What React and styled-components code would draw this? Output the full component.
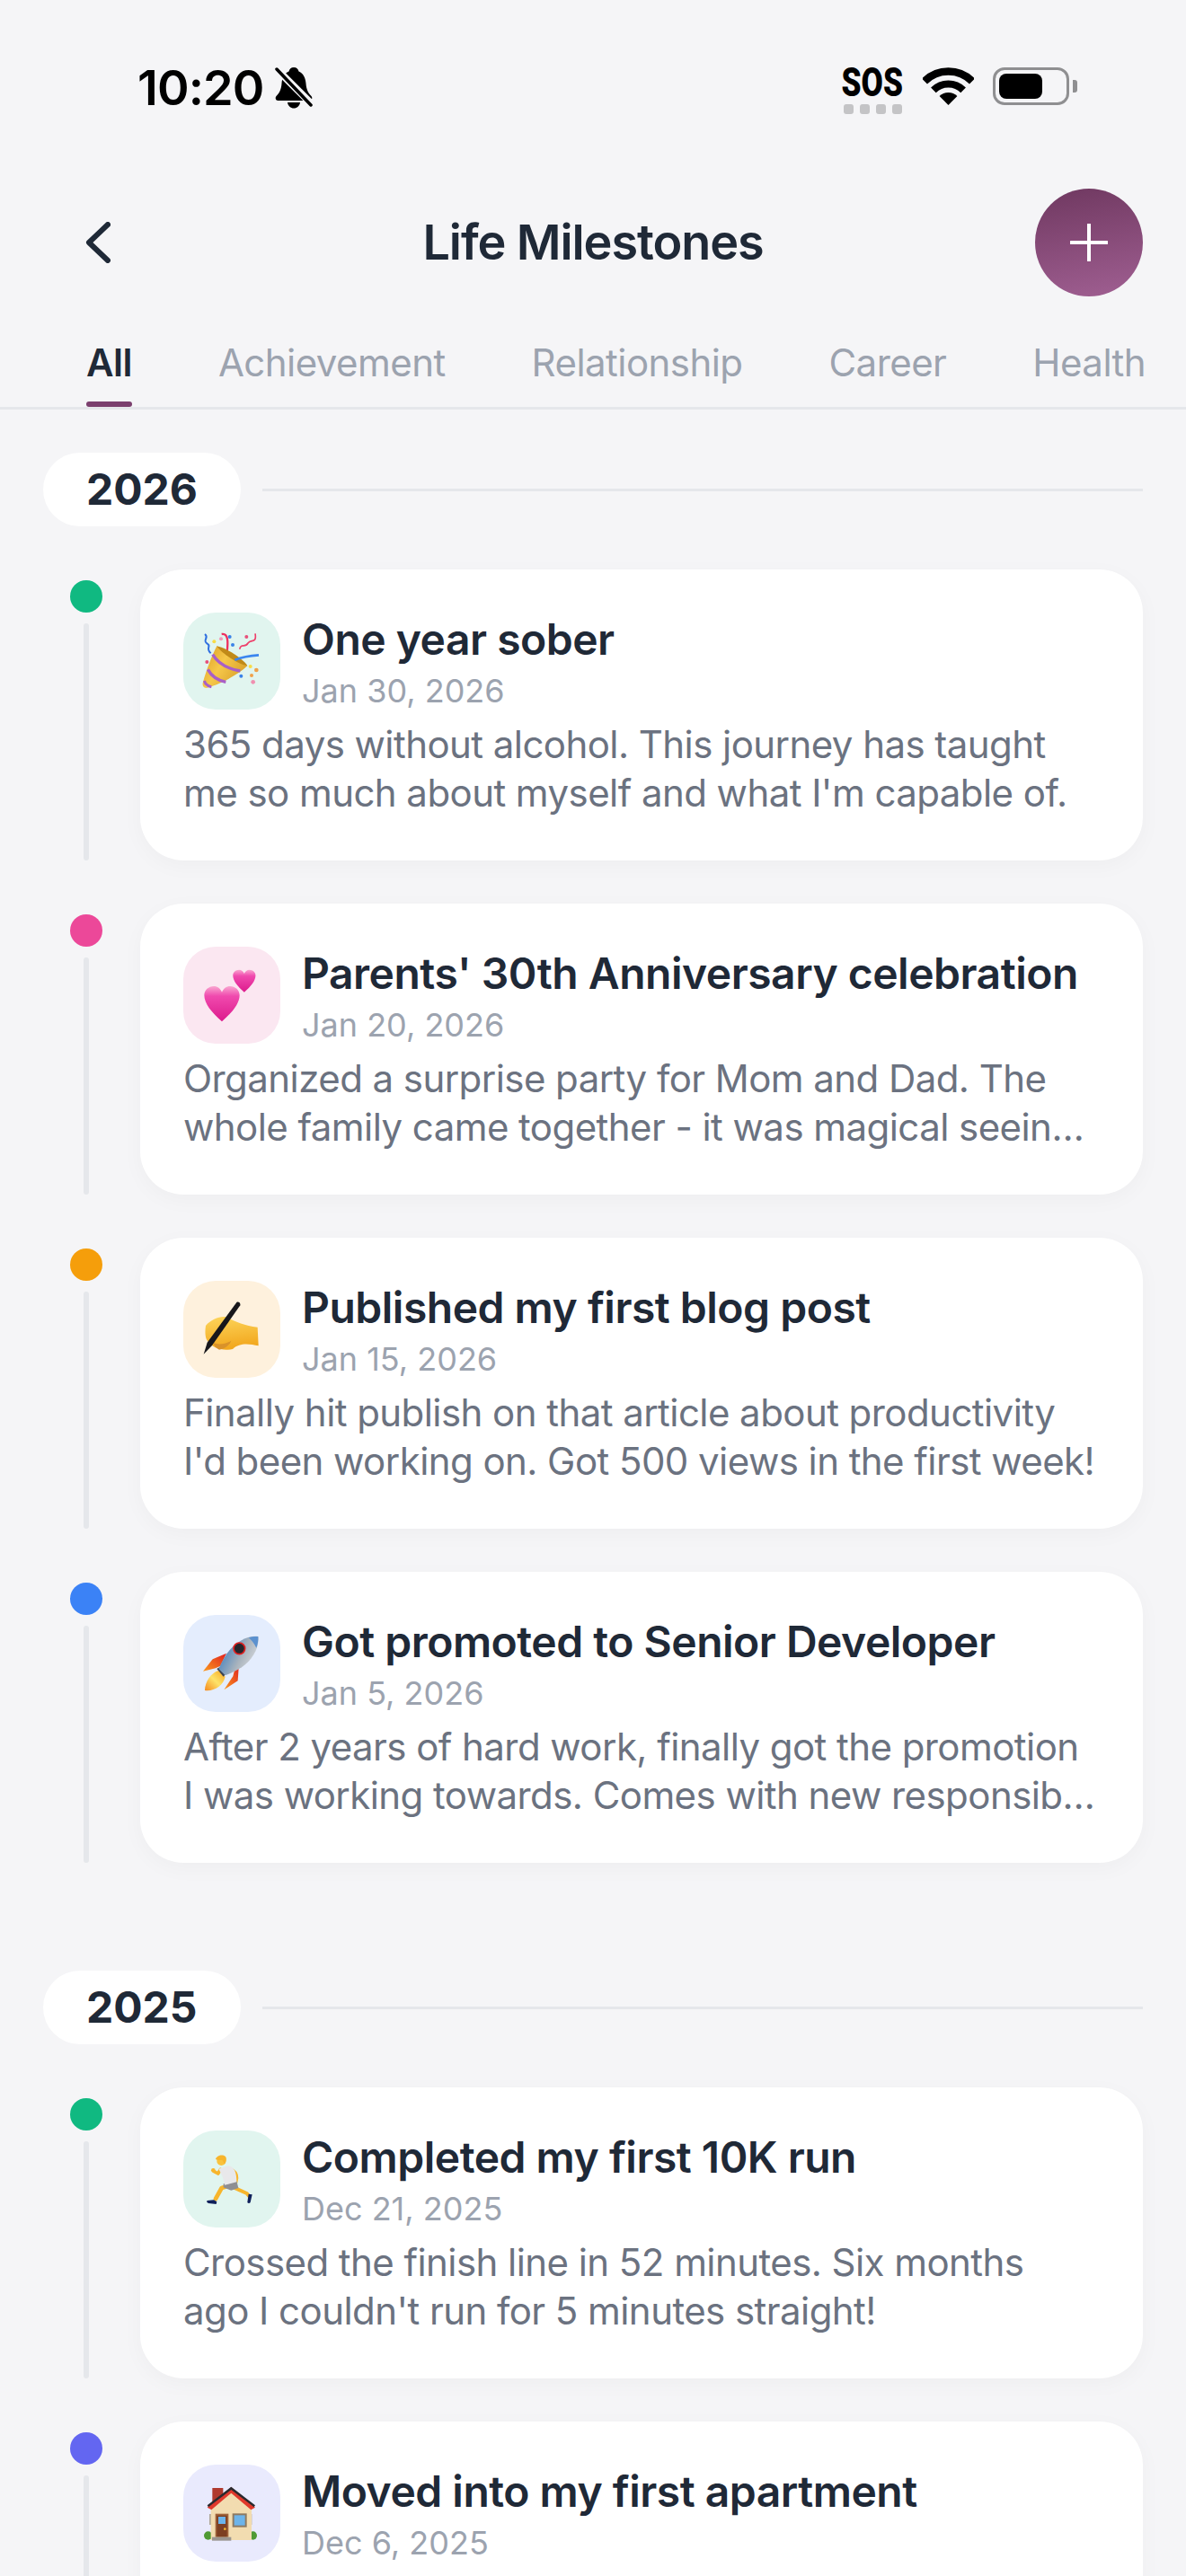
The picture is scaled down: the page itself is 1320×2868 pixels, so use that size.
import React from "react";
import styled, { createGlobalStyle } from "styled-components";

const Global = createGlobalStyle`
  html, body { margin: 0; padding: 0; background: #f5f5f7; }
  body { font-family: Inter, "Liberation Sans", sans-serif; -webkit-font-smoothing: antialiased; }
  * { box-sizing: border-box; }
`;

const Page = styled.div`
  width: 1320px;
  height: 2868px;
  overflow: hidden;
  background: #f5f5f7;
`;

const StatusBar = styled.div`
  height: 210px;
  padding: 75px 122px 0 153px;
  display: flex;
  justify-content: space-between;
  align-items: flex-start;
  color: #000;
`;
const StatusLeft = styled.div`
  display: flex;
  align-items: flex-start;
  gap: 13px;
`;
const Time = styled.span`
  font-size: 54px;
  font-weight: 600;
  line-height: 46px;
  letter-spacing: -0.9px;
`;
const StatusRight = styled.div`
  display: flex;
  align-items: flex-start;
  gap: 21px;
`;
const Sos = styled.div`
  width: 70px;
  display: flex;
  flex-direction: column;
  align-items: center;
`;
const SosText = styled.span`
  font-family: Roboto, "Liberation Sans", sans-serif;
  font-weight: 900;
  font-size: 44px;
  line-height: 35px;
  transform: scaleX(0.8);
  white-space: nowrap;
`;
const SosDots = styled.div`
  margin-top: 6px;
  display: flex;
  gap: 7px;
`;
const SosDot = styled.i`
  width: 11px;
  height: 11px;
  border-radius: 3px;
  background: #c4c4c6;
`;
const Battery = styled.div`
  position: relative;
  width: 85px;
  height: 42px;
  border: 3.5px solid #8f8f91;
  border-radius: 13px;
  padding: 4px;
  margin-right: 8px;
  &::after {
    content: "";
    position: absolute;
    right: -11.5px;
    top: 11px;
    width: 5px;
    height: 14px;
    background: #8f8f91;
    border-radius: 0 3px 3px 0;
  }
`;
const BatteryFill = styled.div`
  width: 48px;
  height: 100%;
  background: #000;
  border-radius: 8px;
`;

const Header = styled.header`
  height: 120px;
  padding: 0 48px;
  display: grid;
  grid-template-columns: 1fr auto 1fr;
  align-items: center;
`;
const BackButton = styled.button`
  justify-self: start;
  margin-left: 47px;
  padding: 0;
  border: 0;
  background: none;
  display: flex;
`;
const Title = styled.h1`
  margin: 0;
  font-size: 54px;
  line-height: 66px;
  font-weight: 600;
  letter-spacing: -1.1px;
  color: #1f2937;
`;
const AddButton = styled.button`
  justify-self: end;
  width: 120px;
  height: 120px;
  padding: 0;
  border: 0;
  border-radius: 50%;
  background: linear-gradient(170deg, #6f3860 0%, #a05f92 100%);
  display: flex;
  align-items: center;
  justify-content: center;
`;

const TabBar = styled.nav`
  display: flex;
  gap: 96px;
  padding: 48px 0 0 96px;
  border-bottom: 3px solid #e5e7eb;
  overflow: hidden;
`;
const Tab = styled.span`
  position: relative;
  flex-shrink: 0;
  padding-bottom: 24px;
  font-size: 42px;
  line-height: 51px;
  letter-spacing: -0.55px;
  font-weight: ${(p) => (p.$active ? 600 : 400)};
  color: ${(p) => (p.$active ? "#1f2937" : "#9ca3af")};
  ${(p) =>
    p.$active &&
    `&::after {
      content: "";
      position: absolute;
      left: 0;
      right: 0;
      bottom: 0;
      height: 6px;
      border-radius: 3px;
      background: #7b3f6e;
    }`}
`;

const Content = styled.main`
  padding: 48px 48px 0;
`;
const YearSection = styled.section`
  padding-bottom: 72px;
`;
const YearHeader = styled.div`
  display: flex;
  align-items: center;
  gap: 24px;
  margin-bottom: 48px;
`;
const YearPill = styled.div`
  padding: 12px 48px;
  border-radius: 41px;
  background: #fff;
  font-size: 48px;
  line-height: 58px;
  font-weight: 700;
  color: #1f2937;
`;
const YearRule = styled.div`
  flex: 1;
  height: 3px;
  background: #e5e7eb;
`;
const Row = styled.article`
  display: flex;
  gap: 42px;
  padding-left: 30px;
  margin-bottom: 48px;
`;
const Rail = styled.div`
  width: 36px;
  flex-shrink: 0;
  display: flex;
  flex-direction: column;
  align-items: center;
  padding-top: 12px;
`;
const Dot = styled.div`
  width: 36px;
  height: 36px;
  border-radius: 50%;
  background: ${(p) => p.$color};
`;
const RailLine = styled.div`
  flex: 1;
  width: 6px;
  margin-top: 12px;
  background: #e5e7eb;
  border-radius: 3px;
`;
const Card = styled.div`
  flex: 1;
  min-width: 0;
  min-height: 324px;
  padding: 48px;
  border-radius: 48px;
  background: #fff;
  box-shadow: 0 6px 24px rgba(0, 0, 0, 0.03);
`;
const CardTop = styled.div`
  display: flex;
  gap: 24px;
  margin-bottom: 12px;
`;
const IconBox = styled.div`
  width: 108px;
  height: 108px;
  flex-shrink: 0;
  border-radius: 36px;
  background: ${(p) => p.$bg};
  overflow: hidden;
  svg {
    display: block;
  }
`;
const CardHead = styled.div`
  min-width: 0;
`;
const CardTitle = styled.h2`
  margin: 0 0 6px;
  font-size: 48px;
  line-height: 60px;
  font-weight: 600;
  letter-spacing: -0.5px;
  color: #1f2937;
  white-space: nowrap;
`;
const CardDate = styled.div`
  font-size: 36px;
  line-height: 42px;
  color: #9ca3af;
`;
const CardLine = styled.div`
  font-size: 42px;
  line-height: 54px;
  letter-spacing: -0.56px;
  color: #6b7280;
  white-space: nowrap;
  overflow: hidden;
  text-overflow: ellipsis;
`;

const Emoji = ({ children }) => (
  <svg width="108" height="108" viewBox="0 0 324 324" fill="none">
    {children}
  </svg>
);

const Popper = () => (
  <Emoji>
    <defs>
      <linearGradient id="pop" x1="0" y1="0" x2="1" y2="0.6">
        <stop offset="0" stopColor="#d99a22" />
        <stop offset="0.5" stopColor="#f6c84a" />
        <stop offset="1" stopColor="#d9a02a" />
      </linearGradient>
    </defs>
    <path d="M72 72c16 12-10 20 8 32 16 8-8 14 12 32" stroke="#2f6fe0" strokeWidth="6" />
    <path d="M128 72c22-4 22 24 18 62" stroke="#ee3060" strokeWidth="7" />
    <path d="M188 122c6-22 18-2 28-20 10-14 30 2 24-32" stroke="#ee3f6a" strokeWidth="5" />
    <path d="M112 112c30 12 85 48 102 66-34 32-94 62-136 74-10 0-16-7-12-20 12-42 29-87 46-120z" fill="url(#pop)" />
    <path d="M112 112c38 8 93 48 102 66-24-3-84-38-102-66z" fill="#c08a18" />
    <path d="M98 140c18 30 50 48 92 55" stroke="#a85fc8" strokeWidth="10" />
    <path d="M82 190c12 22 30 36 60 42" stroke="#a85fc8" strokeWidth="10" />
    <path d="M70 228c4 12 12 18 24 20" stroke="#a85fc8" strokeWidth="9" />
    <path d="M172 158c26-10 52-14 80-16" stroke="#3b86ef" strokeWidth="8" />
    <circle cx="103" cy="97" r="6" fill="#f8dc45" />
    <circle cx="126" cy="88" r="6" fill="#f29ab8" />
    <circle cx="155" cy="81" r="6" fill="#3a82e8" />
    <circle cx="165" cy="108" r="6" fill="#3a82e8" />
    <circle cx="211" cy="81" r="6" fill="#e8507a" />
    <circle cx="79" cy="165" r="6" fill="#e8507a" />
    <circle cx="224" cy="180" r="6" fill="#f8dc45" />
    <circle cx="244" cy="192" r="7" fill="#f0a14a" />
    <circle cx="193" cy="212" r="6" fill="#3a82e8" />
    <circle cx="228" cy="210" r="6" fill="#f0a14a" />
    <circle cx="233" cy="232" r="7" fill="#f08fb0" />
  </Emoji>
);

const heart =
  "M129 250C95 220 70 190 70 162 70 145 85 132 102 132 114 132 124 140 129 152 134 140 144 132 156 132 173 132 188 145 188 162 188 190 163 220 129 250Z";
const Hearts = () => (
  <Emoji>
    <defs>
      <linearGradient id="hrt" x1="0" y1="0" x2="0" y2="1">
        <stop offset="0" stopColor="#f9a6d0" />
        <stop offset="0.28" stopColor="#f04aae" />
        <stop offset="1" stopColor="#dc1a8c" />
      </linearGradient>
    </defs>
    <path d={heart} fill="url(#hrt)" transform="translate(121 -7.5) scale(.64)" />
    <path d={heart} fill="url(#hrt)" />
  </Emoji>
);

const Writing = () => (
  <Emoji>
    <defs>
      <linearGradient id="hand" x1="0" y1="0" x2="0.2" y2="1">
        <stop offset="0" stopColor="#fdd65c" />
        <stop offset="1" stopColor="#f2a81f" />
      </linearGradient>
    </defs>
    <path d="M75 150c15-20 45-32 65-30 25 10 60 30 108 35l3 62c-30-6-62-12-86 11-35 7-65-3-80-23-13-10-13-35-10-55z" fill="url(#hand)" />
    <path d="M100 208c20 6 40 4 60-8-5 14-20 28-40 30-10-4-16-12-20-22z" fill="#d9922a" />
    <path d="M178 72c6-4 14 2 12 10L96 216 68 245l12-39z" fill="#17171b" />
  </Emoji>
);

const Rocket = () => (
  <Emoji>
    <defs>
      <linearGradient id="rk" x1="0" y1="0.4" x2="1" y2="0.9">
        <stop offset="0" stopColor="#3f7fbf" />
        <stop offset="0.5" stopColor="#a8b3bd" />
        <stop offset="1" stopColor="#e8e8e8" />
      </linearGradient>
      <linearGradient id="fin" x1="1" y1="0" x2="0" y2="1">
        <stop offset="0" stopColor="#e01f1f" />
        <stop offset="1" stopColor="#fb9a1e" />
      </linearGradient>
      <linearGradient id="flm" x1="1" y1="0" x2="0" y2="1">
        <stop offset="0" stopColor="#f9a51e" />
        <stop offset="0.5" stopColor="#fde36a" />
        <stop offset="1" stopColor="#f58a1e" />
      </linearGradient>
    </defs>
    <path d="M144 128 98 148 66 188l42-10 16-8z" fill="url(#fin)" />
    <path d="M176 165l-10 40-30 45 46-30 4-58z" fill="url(#fin)" />
    <path d="M118 186c-24 6-46 36-46 66 30 4 62-16 68-46z" fill="url(#flm)" />
    <path d="M112 180l16-10 20 20-14 16z" fill="#3c4450" />
    <path d="M250 72c-40-4-80 23-105 58-10 15-20 35-27 50l22 22c20-7 40-17 55-27 35-25 60-65 55-103z" fill="url(#rk)" />
    <path d="M218 76c10 8 18 18 26 34 5-12 7-26 6-38-10-1-20 0-32 4z" fill="#5b91cf" />
    <circle cx="187" cy="112" r="19" fill="#26262c" stroke="#e02020" strokeWidth="5" />
  </Emoji>
);

const Runner = () => (
  <Emoji>
    <g stroke="#f7b52c" strokeLinecap="round" strokeLinejoin="round">
      <path d="M150 185l-22 7-20 36" strokeWidth="14" />
      <path d="M168 190l44 20 8 10" strokeWidth="12" />
      <path d="M124 130l-8 14-14-8" strokeWidth="11" />
      <path d="M164 132c14 10 18 22 12 40l-8 8" strokeWidth="11" />
    </g>
    <path d="M80 234l22-2 10 6-2 8-26-3c-6-2-7-7-4-9z" fill="#10205a" />
    <path d="M218 212l12 2-6 26c-2 4-8 4-10 0z" fill="#10205a" />
    <path d="M134 178l44-10 6 24-24 8-26-10z" fill="#8e8e92" />
    <path d="M118 128l32-10c20 2 28 22 28 54l-40 10c-3-22-10-37-20-54z" fill="#e8e8ea" />
    <circle cx="100" cy="133" r="7" fill="#f7b52c" />
    <circle cx="127" cy="102" r="15" fill="#f9c23c" />
    <path d="M108 96c2-12 22-18 32-10 6 6 4 18-2 26-4-6-6-10-8-14-8 2-16 2-22-2z" fill="#f7b52c" />
  </Emoji>
);

const House = () => (
  <Emoji>
    <ellipse cx="83" cy="237" rx="14" ry="14" fill="#4f9a34" />
    <ellipse cx="233" cy="237" rx="13" ry="14" fill="#4f9a34" />
    <rect x="97" y="78" width="36" height="50" fill="#b03a2e" />
    <rect x="87" y="165" width="6" height="36" fill="#b0a898" />
    <rect x="223" y="165" width="6" height="36" fill="#b0a898" />
    <path d="M92 146l68-60 68 60v106H92z" fill="#f2dcb0" />
    <path d="M80 143l80-68 80 68-14 8-66-56-66 56z" fill="#e0392c" />
    <path d="M80 136l80-62 80 62-4 6-76-58-76 58z" fill="#2a2a2e" />
    <rect x="107" y="164" width="44" height="78" fill="#a0633a" />
    <rect x="112" y="170" width="34" height="71" fill="#7c3f22" />
    <rect x="117" y="174" width="24" height="24" fill="#6cb4ea" />
    <circle cx="139" cy="215" r="4" fill="#f2b52c" />
    <rect x="164" y="163" width="48" height="46" fill="#8d7a62" />
    <rect x="170" y="169" width="36" height="34" fill="#6cb4ea" />
    <rect x="96" y="242" width="64" height="12" fill="#9a9590" />
  </Emoji>
);

const years = [
  {
    year: "2026",
    items: [
      { color: "#10b981", bg: "#e1f5ef", Icon: Popper, title: "One year sober", date: "Jan 30, 2026", lines: ["365 days without alcohol. This journey has taught", "me so much about myself and what I'm capable of."] },
      { color: "#ec4899", bg: "#fbe7f1", Icon: Hearts, title: "Parents' 30th Anniversary celebration", date: "Jan 20, 2026", lines: ["Organized a surprise party for Mom and Dad. The", "whole family came together - it was magical seeing everyone so happy together."] },
      { color: "#f59e0b", bg: "#fef1dd", Icon: Writing, title: "Published my first blog post", date: "Jan 15, 2026", lines: ["Finally hit publish on that article about productivity", "I'd been working on. Got 500 views in the first week!"] },
      { color: "#3b82f6", bg: "#e4edfd", Icon: Rocket, title: "Got promoted to Senior Developer", date: "Jan 5, 2026", lines: ["After 2 years of hard work, finally got the promotion", "I was working towards. Comes with new responsibilities and a great team."] },
    ],
  },
  {
    year: "2025",
    items: [
      { color: "#10b981", bg: "#e1f5ef", Icon: Runner, title: "Completed my first 10K run", date: "Dec 21, 2025", lines: ["Crossed the finish line in 52 minutes. Six months", "ago I couldn't run for 5 minutes straight!"] },
      { color: "#6366f1", bg: "#e9eafd", Icon: House, title: "Moved into my first apartment", date: "Dec 6, 2025", lines: [] },
    ],
  },
];

const tabs = ["All", "Achievement", "Relationship", "Career", "Health"];

export default function App() {
  return (
    <Page>
      <Global />
      <StatusBar>
        <StatusLeft>
          <Time>10:20</Time>
          <svg width="42" height="46" viewBox="0 0 42 46">
            <path d="M21 0c3 0 5 2 5.500 4.500C32 7 34 12 34.500 18c.5 6 2 10 6 14 1.500 1.500 1 5-2 5H3.500c-3 0-3.500-3.500-2-5 4-4 5.500-8 6-14C8 12 10 7 15.500 4.500 16 2 18 0 21 0z" fill="#000" />
            <path d="M14 39h14c-.5 4-3.500 6.500-7 6.500S14.500 43 14 39z" fill="#000" />
            <path d="M1 1l40 40" stroke="#f5f5f7" strokeWidth="8" />
            <path d="M2 2l38 40" stroke="#000" strokeWidth="3.500" strokeLinecap="round" />
          </svg>
        </StatusLeft>
        <StatusRight>
          <Sos>
            <SosText>SOS</SosText>
            <SosDots>
              <SosDot />
              <SosDot />
              <SosDot />
              <SosDot />
            </SosDots>
          </Sos>
          <svg width="57" height="42" viewBox="0 0 57 42" fill="none">
            <path d="M2 15.500a37.500 37.500 0 0 1 53 0" stroke="#000" strokeWidth="8.500" />
            <path d="M11.900 25.400a23.500 23.500 0 0 1 33.200 0" stroke="#000" strokeWidth="8" />
            <path d="M28.500 42l-9.900-9.900a14 14 0 0 1 19.800 0z" fill="#000" />
          </svg>
          <Battery>
            <BatteryFill />
          </Battery>
        </StatusRight>
      </StatusBar>

      <Header>
        <BackButton aria-label="Back">
          <svg width="28" height="46" viewBox="0 0 28 46" fill="none">
            <path d="M25 3 4 23l21 20" stroke="#1f2937" strokeWidth="6" strokeLinecap="round" strokeLinejoin="round" />
          </svg>
        </BackButton>
        <Title>Life Milestones</Title>
        <AddButton aria-label="Add">
          <svg width="42" height="42" viewBox="0 0 42 42" fill="none">
            <path d="M21 1v40M1 21h40" stroke="#fff" strokeWidth="4" strokeLinecap="round" />
          </svg>
        </AddButton>
      </Header>

      <TabBar>
        {tabs.map((t, i) => (
          <Tab key={t} $active={i === 0}>
            {t}
          </Tab>
        ))}
      </TabBar>

      <Content>
        {years.map((y) => (
          <YearSection key={y.year}>
            <YearHeader>
              <YearPill>{y.year}</YearPill>
              <YearRule />
            </YearHeader>
            {y.items.map(({ color, bg, Icon, title, date, lines }) => (
              <Row key={title}>
                <Rail>
                  <Dot $color={color} />
                  <RailLine />
                </Rail>
                <Card>
                  <CardTop>
                    <IconBox $bg={bg}>
                      <Icon />
                    </IconBox>
                    <CardHead>
                      <CardTitle>{title}</CardTitle>
                      <CardDate>{date}</CardDate>
                    </CardHead>
                  </CardTop>
                  {lines.map((line) => (
                    <CardLine key={line}>{line}</CardLine>
                  ))}
                </Card>
              </Row>
            ))}
          </YearSection>
        ))}
      </Content>
    </Page>
  );
}
